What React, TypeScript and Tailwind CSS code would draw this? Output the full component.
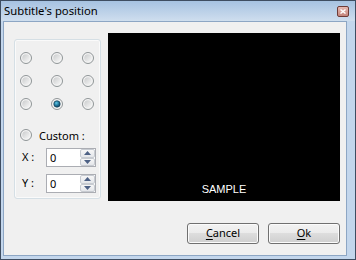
import React from "react";

function Radio({ checked = false }: { checked?: boolean }) {
  return (
    <svg width="12" height="12" viewBox="0 0 12 12" className="block">
      <defs>
        <linearGradient id="rg" x1="0" y1="0" x2="1" y2="1">
          <stop offset="0" stopColor="#c9cbcc" />
          <stop offset="1" stopColor="#f8f8f8" />
        </linearGradient>
        <radialGradient id="rs" cx="0.4" cy="0.35" r="0.7">
          <stop offset="0" stopColor="#5fc8e6" />
          <stop offset="0.6" stopColor="#1d6d92" />
          <stop offset="1" stopColor="#123f5a" />
        </radialGradient>
      </defs>
      <circle cx="6" cy="6" r="5.5" fill="#f4f4f4" stroke="#8f9597" strokeWidth="1" />
      <circle cx="6" cy="6" r="3.8" fill="url(#rg)" />
      {checked && <circle cx="6" cy="6" r="3.2" fill="url(#rs)" stroke="#0d3a52" strokeWidth="0.6" />}
    </svg>
  );
}

function Spin({ value }: { value: string }) {
  return (
    <div className="flex w-[50px] h-[19px] border border-[#abadb3] bg-white">
      <div className="flex-1 pl-[3px] text-[11px] leading-[17px] text-black">{value}</div>
      <div className="flex flex-col w-[15px] h-full">
        <div className="flex-1 flex items-center justify-center border border-[#c7cbd1] rounded-[2px] bg-gradient-to-b from-[#f7f7f7] to-[#e4e6ea]">
          <svg width="7" height="4" viewBox="0 0 7 4"><path d="M0 4 L3.5 0 L7 4 Z" fill="#4d6185" /></svg>
        </div>
        <div className="flex-1 flex items-center justify-center border border-[#c7cbd1] rounded-[2px] bg-gradient-to-b from-[#f7f7f7] to-[#e4e6ea]">
          <svg width="7" height="4" viewBox="0 0 7 4"><path d="M0 0 L3.5 4 L7 0 Z" fill="#4d6185" /></svg>
        </div>
      </div>
    </div>
  );
}

function Button({ first, rest }: { first: string; rest: string }) {
  return (
    <div className="w-[72px] h-[21px] rounded-[3px] border border-[#707070] flex items-center justify-center text-[11px] text-black bg-[linear-gradient(to_bottom,#f2f2f2_0%,#ebebeb_50%,#dddddd_50%,#cfcfcf_100%)] shadow-[inset_0_0_0_1px_#fbfbfb]">
      <span><span className="underline underline-offset-[2px]">{first}</span>{rest}</span>
    </div>
  );
}

export default function App() {
  return (
    <div
      className="w-[356px] h-[260px] border border-[#3e4d61] bg-[#c3d6ec] flex flex-col overflow-hidden"
      style={{ fontFamily: '"Noto Sans", "Open Sans", sans-serif' }}
    >
      <div className="h-[20px] flex items-center justify-between pl-[3px] pr-[6px] bg-gradient-to-b from-[#a6c2e1] to-[#cfdeee]">
        <span className="text-[11.3px] text-black leading-none">Subtitle's position</span>
        <div className="w-[12px] h-[11px] rounded-[2px] border border-[#6e3b37] bg-gradient-to-b from-[#e7b9b2] to-[#c4857c] flex items-center justify-center">
          <svg width="6" height="5" viewBox="0 0 6 5"><path d="M0.5 0.5 L5.5 4.5 M5.5 0.5 L0.5 4.5" stroke="#ffffff" strokeWidth="1.4" /></svg>
        </div>
      </div>
      <div className="flex-1 flex pl-[2px] pr-[8px] pb-[3px]">
        <div className="flex-1 border border-[#8da6c4] bg-[#f0f0f0] flex flex-col">
          <div className="flex items-start pt-[11px]">
            <div className="ml-[10px] mt-[6px] w-[87px] h-[160px] rounded-[3px] border border-[#d5dfe5] shadow-[inset_0_0_0_1px_#fafafa] pl-[5px] pt-[12px]">
              <div className="grid grid-cols-[12px_12px_12px] gap-x-[19px] gap-y-[11px]">
                <Radio /><Radio /><Radio />
                <Radio /><Radio /><Radio />
                <Radio /><Radio checked /><Radio />
              </div>
              <div className="flex items-center mt-[18px] h-[14px]">
                <Radio />
                <span className="ml-[7px] text-[11px] text-black leading-none">Custom :</span>
              </div>
              <div className="flex items-center mt-[6px] pl-[2px]">
                <span className="w-[24px] text-[11px] text-black">X :</span>
                <Spin value="0" />
              </div>
              <div className="flex items-center mt-[7px] pl-[2px]">
                <span className="w-[24px] text-[11px] text-black">Y :</span>
                <Spin value="0" />
              </div>
            </div>
            <div className="ml-[7px] w-[232px] h-[168px] bg-black flex flex-col justify-end items-center pb-[6px]">
              <span className="text-white text-[11px] leading-none" style={{ fontFamily: '"Liberation Sans", Arial, sans-serif' }}>SAMPLE</span>
            </div>
          </div>
          <div className="flex justify-end gap-[9px] pr-[6px] mt-[22px]">
            <Button first="C" rest="ancel" />
            <Button first="O" rest="k" />
          </div>
        </div>
      </div>
    </div>
  );
}
